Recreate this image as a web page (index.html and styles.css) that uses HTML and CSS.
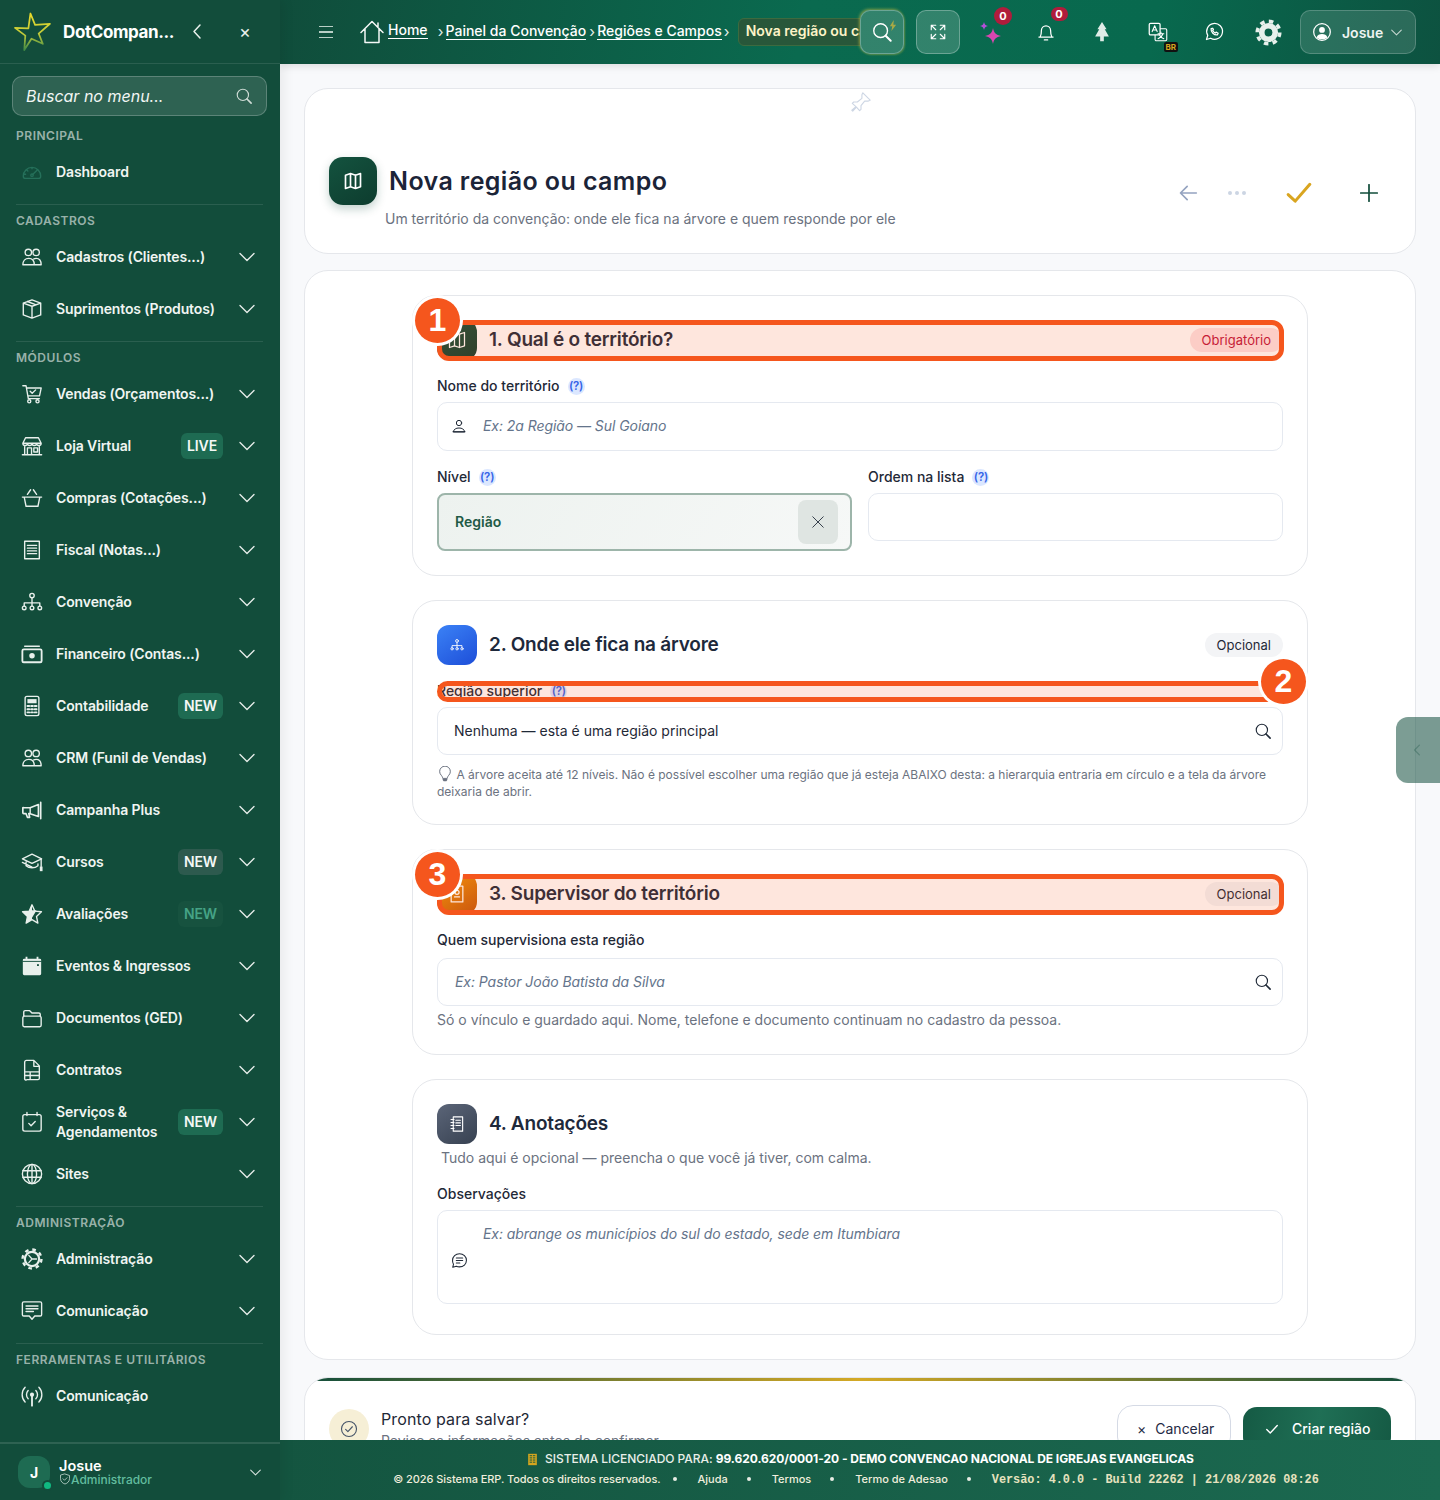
FILE: index.html
```html
<!DOCTYPE html>
<html lang="pt-BR">
<head>
<meta charset="utf-8">
<title>Nova região ou campo</title>
<link rel="stylesheet" href="styles.css">
</head>
<body>
<svg class="sprite" aria-hidden="true">
  <defs>
    <linearGradient id="star-grad" x1="0" y1="0" x2="0" y2="1"><stop offset="0" stop-color="#e8d92a"/><stop offset=".55" stop-color="#c2cb3a"/><stop offset="1" stop-color="#3f8a45"/></linearGradient>
    <symbol id="i-chev" viewBox="0 0 16 16"><path d="M1 4.500l7 7 7-7"/></symbol>
    <symbol id="i-dash" viewBox="0 0 24 24"><path d="M2.500 16.500a9.500 9.500 0 1 1 19 0c0 1.500-1 2.500-2.500 2.500H5c-1.500 0-2.500-1-2.500-2.500zM12 7v1.500M6.500 10l1 1M17.500 10l-4.500 4.500M3.500 14.500H5"/><circle cx="12" cy="15.500" r="1.300"/></symbol>
    <symbol id="i-people" viewBox="0 0 24 24"><circle cx="8" cy="7" r="3.500"/><circle cx="16.500" cy="7" r="3.500"/><path d="M2 20.500c0-4 2.500-7 6.500-7s6 3 6 7zM14 14c.8-.4 1.600-.5 2.500-.5 3.500 0 5.500 3 5.500 7h-7.500"/></symbol>
    <symbol id="i-box" viewBox="0 0 24 24"><path d="M12 2l9.500 3.500v13L12 22l-9.500-3.500v-13zM2.500 5.500L12 9l9.500-3.500M12 9v13M7 3.800l9.500 3.600"/></symbol>
    <symbol id="i-cart" viewBox="0 0 24 24"><path d="M2 3h3.500l2.500 14h12M6 5.500h16l-1.800 8.500H7.500M10 9l2.200 2.200L16 7.500"/><circle cx="9" cy="20" r="1.700"/><circle cx="18" cy="20" r="1.700"/></symbol>
    <symbol id="i-shop" viewBox="0 0 24 24"><path d="M5 3h14l3 6c0 1.500-1.200 2.500-2.500 2.500S17 10.500 17 9c0 1.500-1.200 2.500-2.500 2.500S12 10.500 12 9c0 1.500-1.200 2.500-2.500 2.500S7 10.500 7 9c0 1.500-1.200 2.500-2.500 2.500S2 10.500 2 9zM2 9h20M4 11.500V21M20 11.500V21M1.500 21.500h21M7 14h4.500v7.500H7zM14 14h4v4.500h-4z"/></symbol>
    <symbol id="i-basket" viewBox="0 0 24 24"><path d="M1.500 11h21M3.500 11l2 10h13l2-10M7 8l3.500-5M17 8l-3.500-5"/></symbol>
    <symbol id="i-notes" viewBox="0 0 24 24"><path d="M4 2.500h16v19H4zM7 7h10M7 10h10M7 13h10M7 16h10"/></symbol>
    <symbol id="i-org" viewBox="0 0 24 24"><circle cx="12" cy="5" r="2.400"/><circle cx="3.500" cy="18.500" r="2"/><circle cx="12" cy="18.500" r="2"/><circle cx="20.500" cy="18.500" r="2"/><path d="M12 7.500v9M3.500 16.500v-3.500h17v3.500"/></symbol>
    <symbol id="i-cash" viewBox="0 0 24 24"><path d="M4 3.500h16"/><rect x="1.500" y="7" width="21" height="14" rx="1.500" stroke-width="2"/><circle class="solid" cx="12" cy="14" r="3"/></symbol>
    <symbol id="i-calc" viewBox="0 0 24 24"><rect x="4.500" y="1.500" width="15" height="21" rx="2"/><rect class="solid" x="7" y="4.500" width="10" height="4.500"/><path d="M7 12h2M11 12h2M15 12h2M7 15.500h2M11 15.500h2M15 15.500h2M7 19h2M11 19h2M15 19h2" stroke-width="2"/></symbol>
    <symbol id="i-mega" viewBox="0 0 24 24"><path d="M2 9.500v5.500a1 1 0 0 0 1 1h2.500l1.500 4h2.500l-1-4H10l9 3V6l-9 3.500H3a1 1 0 0 0-1 0zM21.500 3.500v18" stroke-width="1.800"/><path d="M10 9.500V16"/></symbol>
    <symbol id="i-cap" viewBox="0 0 24 24"><path d="M12 3.500L1.500 8.500 12 13.500l10.500-5zM5.500 12v4c3.500 3 9.500 3 13 0v-2M1.500 12.500L12 17.500"/><rect class="solid" x="20.500" y="17" width="3" height="5"/><path d="M22 9v8"/></symbol>
    <symbol id="i-star" viewBox="0 0 24 24"><path d="M12 2l3 6.800 7.300.8-5.400 5 1.500 7.300-6.400-3.700-6.400 3.700 1.500-7.300-5.400-5 7.300-.8z"/><path class="solid" d="M12 2L9 8.800l-7.300.8 5.400 5-1.500 7.300 6.400-3.700zM12 8h5l-5 8z"/></symbol>
    <symbol id="i-calfill" viewBox="0 0 24 24"><path class="solid" d="M5 2h2v2h10V2h2v2h1.500A1.500 1.500 0 0 1 22 5.500v15a1.500 1.500 0 0 1-1.500 1.500h-17A1.500 1.500 0 0 1 2 20.500v-15A1.500 1.500 0 0 1 3.500 4H5z"/><path d="M2 7h20" stroke="#124d3b" stroke-width="1"/><rect x="17.500" y="10" width="2" height="2" fill="#124d3b" stroke="none"/></symbol>
    <symbol id="i-folder" viewBox="0 0 24 24"><path d="M3 10V5.500A1.500 1.500 0 0 1 4.500 4h5L12 6.500h7.500A1.500 1.500 0 0 1 21 8v2M4 10h16a2 2 0 0 1 2 2v8a1.500 1.500 0 0 1-1.500 1.500h-17A1.500 1.500 0 0 1 2 20v-8a2 2 0 0 1 2-2z"/></symbol>
    <symbol id="i-file" viewBox="0 0 24 24"><path d="M6 1.500h8l6 6V21a1.500 1.500 0 0 1-1.500 1.500h-12A1.500 1.500 0 0 1 4 21V3.500a2 2 0 0 1 2-2zM14 1.500V8h6M4 14h16M4 18h16M10 14v8.500"/></symbol>
    <symbol id="i-calcheck" viewBox="0 0 24 24"><rect x="2" y="4" width="20" height="18" rx="2"/><path d="M6.500 1.500V5M17.500 1.500V5M8.500 13.500l2.500 2.500 4.500-4.500"/></symbol>
    <symbol id="i-globe" viewBox="0 0 24 24"><circle cx="12" cy="12" r="10.500"/><ellipse cx="12" cy="12" rx="5" ry="10.500"/><path d="M12 1.500v21M2 8.500h20M2 15.500h20"/></symbol>
    <symbol id="i-gear" viewBox="0 0 24 24"><circle cx="12" cy="12" r="7.800" stroke-width="2.400"/><circle cx="12" cy="12" r="10.300" stroke-width="2.600" stroke-linecap="butt" stroke-dasharray="3.900 4.190"/><path d="M12 12L8.500 8M12 12h5M12 12l-3.500 4" stroke-width="1.400"/></symbol>
    <symbol id="i-chat" viewBox="0 0 24 24"><path d="M3 2h18a1.500 1.500 0 0 1 1.500 1.500V16a1.500 1.500 0 0 1-1.500 1.500h-6L12 21l-3-3.500H3A1.500 1.500 0 0 1 1.500 16V3.500A1.500 1.500 0 0 1 3 2zM5.500 6.500h13M5.500 9.500h13M5.500 12.500h8"/></symbol>
    <symbol id="i-radio" viewBox="0 0 24 24"><circle class="solid" cx="12" cy="10.500" r="2.300"/><path d="M12 12v10.500" stroke-width="2"/><path d="M7.800 6a6.500 6.500 0 0 0 0 9M16.200 6a6.500 6.500 0 0 1 0 9M4.500 2.500a11.500 11.500 0 0 0 0 16M19.500 2.500a11.500 11.500 0 0 1 0 16"/></symbol>
    <symbol id="i-search" viewBox="0 0 24 24"><circle cx="10.500" cy="10.500" r="7.500"/><path d="M16 16l5.500 5.500" stroke-width="2.200"/></symbol>
    <symbol id="i-map" viewBox="0 0 24 24"><path d="M3 5l6-2 6 2 6-2v16l-6 2-6-2-6 2zM9 3v16M15 5v16"/></symbol>
    <symbol id="i-person" viewBox="0 0 24 24"><circle cx="12" cy="7.500" r="4"/><path d="M3.500 20.500c1-4 4-5.500 8.500-5.500s7.500 1.500 8.500 5.500zM3 20.500h18"/></symbol>
    <symbol id="i-x" viewBox="0 0 24 24"><path d="M3 3l18 18M21 3L3 21"/></symbol>
    <symbol id="i-check" viewBox="0 0 24 24"><path d="M3 13l6 6L21 6"/></symbol>
    <symbol id="i-bulb" viewBox="0 0 24 24"><path d="M8.500 18c-.3-2-1.200-3-2.500-4.500A8 8 0 1 1 18 13.500c-1.300 1.500-2.200 2.500-2.500 4.500z"/><path class="solid" d="M8.500 19h7v2l-1.500 2h-4l-1.500-2z"/></symbol>
    <symbol id="i-bubble" viewBox="0 0 24 24"><path d="M12 2.500c5.500 0 9.800 4 9.800 9.300S17.500 21 12 21c-1.800 0-3.300-.4-4.500-1L2.500 21.500l1-4.200A9 9 0 0 1 2.200 11.800C2.200 6.500 6.500 2.500 12 2.500zM7.500 8.500h9M7.500 12h9M7.500 15.500h5"/></symbol>
    <symbol id="i-notebook" viewBox="0 0 24 24"><path d="M7 2.500h12.500v19H7zM4 6h4M4 10h4M4 14h4M4 18h4M10.500 7h6M10.500 10.500h6M10.500 14h6"/></symbol>
    <symbol id="i-checkc" viewBox="0 0 24 24"><circle cx="12" cy="12" r="10"/><path d="M7.500 12.500l3 3 6-6.500"/></symbol>
    <symbol id="i-shield" viewBox="0 0 24 24"><path d="M12 2l9 3v6c0 6-4 9.500-9 11-5-1.500-9-5-9-11V5zM8 11.500l3 3 5-5"/></symbol>
    <symbol id="i-building" viewBox="0 0 24 24"><path class="solid" d="M4 1.500h16v21H4z"/><path d="M7.500 5h3M13.500 5h3M7.500 9h3M13.500 9h3M7.500 13h3M13.500 13h3M7.500 17h3M13.500 17h3" stroke="#155a45" stroke-width="1.800"/></symbol>
  </defs>
</svg>

<div class="app">
  <aside class="sidebar">
    <div class="brand">
      <svg class="logo" viewBox="0 0 36 40"><path d="M16 2l4.500 11L35 12l-11 9.500 4 10-11-5-7 11 1-14L1 16l13 .500z" fill="none" stroke="url(#star-grad)" stroke-width="1.700"/></svg>
      <span class="brand-name">DotCompan...</span>
      <svg class="brand-back" viewBox="0 0 10 17"><path d="M8 2L2 8.500 8 15"/></svg>
      <span class="brand-close">×</span>
    </div>
    <div class="menu-search">
      <span class="menu-search-text">Buscar no menu...</span>
      <svg class="ic18"><use href="#i-search"/></svg>
    </div>
    <nav class="nav">
      <section class="nav-group first">
        <h4 class="nav-label">PRINCIPAL</h4>
        <div class="nav-item"><svg class="nav-ic dim"><use href="#i-dash"/></svg><span class="nav-text">Dashboard</span></div>
      </section>
      <section class="nav-group">
        <h4 class="nav-label">CADASTROS</h4>
        <div class="nav-item"><svg class="nav-ic"><use href="#i-people"/></svg><span class="nav-text">Cadastros (Clientes...)</span><svg class="chev"><use href="#i-chev"/></svg></div>
        <div class="nav-item"><svg class="nav-ic"><use href="#i-box"/></svg><span class="nav-text">Suprimentos (Produtos)</span><svg class="chev"><use href="#i-chev"/></svg></div>
      </section>
      <section class="nav-group">
        <h4 class="nav-label">MÓDULOS</h4>
        <div class="nav-item"><svg class="nav-ic"><use href="#i-cart"/></svg><span class="nav-text">Vendas (Orçamentos...)</span><svg class="chev"><use href="#i-chev"/></svg></div>
        <div class="nav-item"><svg class="nav-ic"><use href="#i-shop"/></svg><span class="nav-text">Loja Virtual</span><span class="tag">LIVE</span><svg class="chev"><use href="#i-chev"/></svg></div>
        <div class="nav-item"><svg class="nav-ic"><use href="#i-basket"/></svg><span class="nav-text">Compras (Cotações...)</span><svg class="chev"><use href="#i-chev"/></svg></div>
        <div class="nav-item"><svg class="nav-ic"><use href="#i-notes"/></svg><span class="nav-text">Fiscal (Notas...)</span><svg class="chev"><use href="#i-chev"/></svg></div>
        <div class="nav-item"><svg class="nav-ic"><use href="#i-org"/></svg><span class="nav-text">Convenção</span><svg class="chev"><use href="#i-chev"/></svg></div>
        <div class="nav-item"><svg class="nav-ic"><use href="#i-cash"/></svg><span class="nav-text">Financeiro (Contas...)</span><svg class="chev"><use href="#i-chev"/></svg></div>
        <div class="nav-item"><svg class="nav-ic"><use href="#i-calc"/></svg><span class="nav-text">Contabilidade</span><span class="tag">NEW</span><svg class="chev"><use href="#i-chev"/></svg></div>
        <div class="nav-item"><svg class="nav-ic"><use href="#i-people"/></svg><span class="nav-text">CRM (Funil de Vendas)</span><svg class="chev"><use href="#i-chev"/></svg></div>
        <div class="nav-item"><svg class="nav-ic"><use href="#i-mega"/></svg><span class="nav-text">Campanha Plus</span><svg class="chev"><use href="#i-chev"/></svg></div>
        <div class="nav-item"><svg class="nav-ic"><use href="#i-cap"/></svg><span class="nav-text">Cursos</span><span class="tag tag-grey">NEW</span><svg class="chev"><use href="#i-chev"/></svg></div>
        <div class="nav-item"><svg class="nav-ic"><use href="#i-star"/></svg><span class="nav-text">Avaliações</span><span class="tag tag-faint">NEW</span><svg class="chev"><use href="#i-chev"/></svg></div>
        <div class="nav-item"><svg class="nav-ic"><use href="#i-calfill"/></svg><span class="nav-text">Eventos &amp; Ingressos</span><svg class="chev"><use href="#i-chev"/></svg></div>
        <div class="nav-item"><svg class="nav-ic"><use href="#i-folder"/></svg><span class="nav-text">Documentos (GED)</span><svg class="chev"><use href="#i-chev"/></svg></div>
        <div class="nav-item"><svg class="nav-ic"><use href="#i-file"/></svg><span class="nav-text">Contratos</span><svg class="chev"><use href="#i-chev"/></svg></div>
        <div class="nav-item"><svg class="nav-ic"><use href="#i-calcheck"/></svg><span class="nav-text">Serviços &amp; Agendamentos</span><span class="tag">NEW</span><svg class="chev"><use href="#i-chev"/></svg></div>
        <div class="nav-item"><svg class="nav-ic"><use href="#i-globe"/></svg><span class="nav-text">Sites</span><svg class="chev"><use href="#i-chev"/></svg></div>
      </section>
      <section class="nav-group">
        <h4 class="nav-label">ADMINISTRAÇÃO</h4>
        <div class="nav-item"><svg class="nav-ic"><use href="#i-gear"/></svg><span class="nav-text">Administração</span><svg class="chev"><use href="#i-chev"/></svg></div>
        <div class="nav-item"><svg class="nav-ic"><use href="#i-chat"/></svg><span class="nav-text">Comunicação</span><svg class="chev"><use href="#i-chev"/></svg></div>
      </section>
      <section class="nav-group">
        <h4 class="nav-label">FERRAMENTAS E UTILITÁRIOS</h4>
        <div class="nav-item"><svg class="nav-ic"><use href="#i-radio"/></svg><span class="nav-text">Comunicação</span></div>
      </section>
    </nav>
    <div class="side-user">
      <div class="avatar">J<span class="online"></span></div>
      <div class="side-user-info">
        <div class="side-user-name">Josue</div>
        <div class="side-user-role"><svg class="ic12"><use href="#i-shield"/></svg>Administrador</div>
      </div>
      <svg class="chev-sm"><use href="#i-chev"/></svg>
    </div>
  </aside>

  <div class="main">
    <header class="topbar">
      <div class="burger"><span></span><span></span><span></span></div>
      <div class="crumbs">
        <svg class="home-ic" viewBox="0 0 24 24"><path d="M1 12.500L12 1.500l11 11M5 9v13.500h14V9M18 3v3.500"/></svg>
        <a class="crumb crumb-home">Home</a>
        <span class="sep sep-first">›</span>
        <a class="crumb">Painel da Convenção</a>
        <span class="sep sep-mid">›</span>
        <a class="crumb">Regiões e Campos</a>
        <span class="sep sep-last">›</span>
        <span class="crumb-current">Nova região ou campo</span>
      </div>
      <div class="top-actions">
        <button class="glass glass-glow"><svg class="ic22"><use href="#i-search"/></svg><svg class="bolt" viewBox="0 0 10 14"><path d="M6 0L1 8h3l-1 6 6-8H5.500z"/></svg></button>
        <button class="glass"><svg class="ic18" viewBox="0 0 24 24"><path d="M9 9L3 3M3 9V3h6M15 9l6-6M15 3h6v6M9 15l-6 6M3 15v6h6M15 15l6 6M21 15v6h-6"/></svg></button>
        <div class="top-cell top-cell-first">
          <svg class="spark" viewBox="0 0 24 30"><path fill="#d946b0" d="M14 9c1 5 3 7 8 8-5 1-7 3-8 8-1-5-3-7-8-8 5-1 7-3 8-8z"/><path fill="#b44fd8" d="M5 3c.5 2.500 1.500 3.500 4 4-2.500.5-3.500 1.500-4 4-.5-2.500-1.500-3.500-4-4 2.500-.5 3.500-1.500 4-4z"/></svg>
          <span class="count count-a">0</span>
        </div>
        <div class="top-cell">
          <svg class="ic20 w" viewBox="0 0 24 24"><path d="M5 18c1-1.500 1.500-2.500 1.500-8a5.500 5.500 0 0 1 11 0c0 5.500.5 6.500 1.500 8zM3.500 18h17M10 21.500h4"/></svg>
          <span class="count count-b">0</span>
        </div>
        <div class="top-cell"><svg class="tree" viewBox="0 0 24 24"><path d="M12 1l5 8h-2l4.500 8H14v5h-4v-5H4.500L9 9H7z"/></svg></div>
        <div class="top-cell">
          <svg class="ic20 w nudge" viewBox="0 0 24 24"><rect x="1.500" y="1.500" width="13" height="14" rx="1.500"/><path d="M5 11.500l3-7 3 7M6 9.500h4" stroke-width="1.300"/><path d="M15 8h6a1.500 1.500 0 0 1 1.500 1.500V21a1.500 1.500 0 0 1-1.500 1.500H10a1.500 1.500 0 0 1-1.500-1.500v-5M12 14h7M15.500 12v2M18 14c-1 3-3 5-6 6M14 16c1 2 3 3.500 5 4" stroke-width="1.300"/></svg>
          <span class="br-tag">BR</span>
        </div>
        <div class="top-cell"><svg class="ic20 w nudge" viewBox="0 0 24 24"><path d="M3 21l1.500-5A9.500 9.500 0 1 1 8 19.500zM8.500 8c-.5 4 3.500 8 7.500 7.500l1-2-2.500-1.300-1 1c-1.500-.7-2.500-1.700-3.200-3.200l1-1L10.500 7.500z"/></svg></div>
        <div class="top-cell"><svg class="ic26" viewBox="0 0 24 24"><circle cx="12" cy="12" r="6" fill="none" stroke="#e8f0ec" stroke-width="5"/><circle cx="12" cy="12" r="10" fill="none" stroke="#e8f0ec" stroke-width="3.200" stroke-linecap="butt" stroke-dasharray="4 3.854"/></svg></div>
        <div class="user-btn">
          <svg class="ic20 w" viewBox="0 0 24 24"><circle cx="12" cy="12" r="10"/><circle class="solid-w" cx="12" cy="9.500" r="3.500"/><path class="solid-w" d="M5.500 18.500c1-3 3.500-4 6.500-4s5.500 1 6.500 4c-3.500 3-9.500 3-13 0z"/></svg>
          <span class="user-name">Josue</span>
          <svg class="chev-user"><use href="#i-chev"/></svg>
        </div>
      </div>
    </header>

    <main class="content">
      <div class="card page-head">
        <svg class="pin" viewBox="0 0 24 24"><path d="M14 2l8 8-2 1-4 0-4 5 0 4-1.500 1.500-3.500-4L3 22l-1-1 4.500-4-4-3.500L4 12h4l5-4 0-4z"/></svg>
        <div class="head-main">
          <div class="head-title-row">
            <div class="head-icon"><svg class="ic20 w"><use href="#i-map"/></svg></div>
            <h1 class="head-title">Nova região ou campo</h1>
          </div>
          <p class="head-sub">Um território da convenção: onde ele fica na árvore e quem responde por ele</p>
        </div>
        <div class="head-actions">
          <div class="act act-back"><svg class="ic20" viewBox="0 0 24 24"><path d="M22 12H3M11 4l-8 8 8 8"/></svg></div>
          <div class="act act-more"><i></i><i></i><i></i></div>
          <div class="act act-ok"><svg class="ok-ic" viewBox="0 0 24 24"><path d="M2 13.500l6.500 6L22 4"/></svg></div>
          <div class="act act-add"><svg class="ic18" viewBox="0 0 24 24"><path d="M12 1v22M1 12h22"/></svg></div>
        </div>
      </div>

      <div class="card form-card">
        <section class="block">
          <div class="block-head">
            <div class="block-icon bi-green"><svg class="ic20 w"><use href="#i-map"/></svg></div>
            <h2 class="block-title">1. Qual é o território?</h2>
            <span class="pill pill-req">Obrigatório</span>
            <div class="mark"><span class="mark-num mn-left">1</span></div>
          </div>
          <div class="label-row"><label class="label">Nome do território</label><span class="help">(?)</span></div>
          <div class="field field-tall"><svg class="ic16 dark"><use href="#i-person"/></svg><span class="ph ph-icon">Ex: 2a Região — Sul Goiano</span></div>
          <div class="two-col">
            <div>
              <div class="label-row"><label class="label">Nível</label><span class="help">(?)</span></div>
              <div class="select">
                <span class="select-val">Região</span>
                <span class="select-clear"><svg class="ic14 dark"><use href="#i-x"/></svg></span>
              </div>
            </div>
            <div>
              <div class="label-row"><label class="label">Ordem na lista</label><span class="help">(?)</span></div>
              <div class="field"></div>
            </div>
          </div>
        </section>

        <section class="block">
          <div class="block-head">
            <div class="block-icon bi-blue"><svg class="ic14 w"><use href="#i-org"/></svg></div>
            <h2 class="block-title">2. Onde ele fica na árvore</h2>
            <span class="pill">Opcional</span>
          </div>
          <div class="label-row">
            <label class="label">Região superior</label><span class="help">(?)</span>
            <div class="mark"><span class="mark-num mn-right">2</span></div>
          </div>
          <div class="field field-pad"><span class="val">Nenhuma — esta é uma região principal</span><svg class="ic18 dark"><use href="#i-search"/></svg></div>
          <p class="hint-tree"><svg class="ic14 grey"><use href="#i-bulb"/></svg> A árvore aceita até 12 níveis. Não é possível escolher uma região que já esteja ABAIXO desta: a hierarquia entraria em círculo e a tela da árvore deixaria de abrir.</p>
        </section>

        <section class="block">
          <div class="block-head">
            <div class="block-icon bi-orange"><svg class="ic20 w" viewBox="0 0 24 24"><path d="M5 2.500h14v19H5zM9 15.500h6M12 7.500a2.500 2.500 0 1 1 0 5 2.500 2.500 0 0 1 0-5z"/></svg></div>
            <h2 class="block-title">3. Supervisor do território</h2>
            <span class="pill">Opcional</span>
            <div class="mark"><span class="mark-num mn-left">3</span></div>
          </div>
          <div class="label-row label-row-wide"><label class="label">Quem supervisiona esta região</label></div>
          <div class="field field-pad"><span class="ph">Ex: Pastor João Batista da Silva</span><svg class="ic18 dark"><use href="#i-search"/></svg></div>
          <p class="hint-plain">Só o vínculo e guardado aqui. Nome, telefone e documento continuam no cadastro da pessoa.</p>
        </section>

        <section class="block block-last">
          <div class="block-head">
            <div class="block-icon bi-slate"><svg class="ic18 w"><use href="#i-notebook"/></svg></div>
            <h2 class="block-title">4. Anotações</h2>
          </div>
          <p class="block-note">Tudo aqui é opcional — preencha o que você já tiver, com calma.</p>
          <div class="label-row label-row-note"><label class="label">Observações</label></div>
          <div class="area">
            <svg class="ic17 dark"><use href="#i-bubble"/></svg>
            <span class="ph ph-area">Ex: abrange os municípios do sul do estado, sede em Itumbiara</span>
          </div>
        </section>
      </div>

      <div class="card save-card">
        <div class="save-bar"></div>
        <div class="save-row">
          <div class="save-ic"><svg class="ic18 slate"><use href="#i-checkc"/></svg></div>
          <div class="save-text">
            <div class="save-title">Pronto para salvar?</div>
            <div class="save-sub">Revise as informações antes de confirmar.</div>
          </div>
          <button class="btn btn-cancel"><span class="btn-x">×</span>Cancelar</button>
          <button class="btn btn-save"><svg class="ic14 w"><use href="#i-check"/></svg>Criar região</button>
        </div>
      </div>
    </main>

    <div class="side-tab"><svg class="tab-chev" viewBox="0 0 10 16"><path d="M8 2L2 8l6 6"/></svg></div>

    <footer class="footer">
      <div class="foot-line1"><svg class="ic13 gold"><use href="#i-building"/></svg><span>SISTEMA LICENCIADO PARA:</span> <b>99.620.620/0001-20 - DEMO CONVENCAO NACIONAL DE IGREJAS EVANGELICAS</b></div>
      <div class="foot-line2">
        <span class="foot-copy">© 2026 Sistema ERP. Todos os direitos reservados.</span><i class="dot"></i>
        <a>Ajuda</a><i class="dot"></i>
        <a>Termos</a><i class="dot"></i>
        <a>Termo de Adesao</a><i class="dot"></i>
        <span class="mono">Versão: 4.0.0 - Build 22262 | 21/08/2026 08:26</span>
      </div>
    </footer>
  </div>
</div>
</body>
</html>
```
FILE: styles.css
```css
* { box-sizing: border-box; }
html, body { margin: 0; height: 100%; }
body { font-family: Inter, "Liberation Sans", sans-serif; color: #1f2937; background: #f8f9fb; overflow: hidden; }
h1, h2, h4, p { margin: 0; }
button { font-family: inherit; }
.sprite { position: absolute; width: 0; height: 0; }
svg { fill: none; stroke: currentColor; stroke-width: 1.5; stroke-linecap: round; stroke-linejoin: round; flex: none; display: block; }
.solid { fill: currentColor; stroke: none; }
.solid-w { fill: #fff; stroke: none; }

.ic12 { width: 12px; height: 12px; }
.ic13 { width: 13px; height: 13px; }
.ic14 { width: 14px; height: 14px; }
.ic16 { width: 16px; height: 16px; }
.ic17 { width: 17px; height: 17px; }
.ic18 { width: 18px; height: 18px; }
.ic20 { width: 20px; height: 20px; }
.ic22 { width: 22px; height: 22px; }
.ic26 { width: 27px; height: 27px; }
.w { color: #fff; }
.dark { color: #1f2937; }
.grey { color: #6b7280; }
.slate { color: #475569; }
.gold { color: #d4a51f; }

.app { display: flex; width: 1440px; height: 1500px; }

/* sidebar */
.sidebar { width: 280px; flex: none; height: 1500px; background: #124d3b; color: #eef4f1; display: flex; flex-direction: column; box-shadow: 3px 0 12px rgba(0,0,0,.07); z-index: 3; }
.brand { height: 64px; flex: none; display: flex; align-items: center; padding-left: 14px; border-bottom: 1px solid rgba(255,255,255,.1); }
.logo { width: 37px; height: 42px; }
.brand-name { font-size: 17px; font-weight: 700; color: #fff; margin-left: 12px; width: 112px; letter-spacing: -.4px; white-space: nowrap; }
.brand-back { width: 10px; height: 17px; margin-left: 17px; color: #e8f0ec; }
.brand-close { font-size: 18px; margin-left: 37px; color: #e8f0ec; line-height: 1; }
.menu-search { margin: 12px 13px 4px 12px; height: 40px; flex: none; display: flex; align-items: center; justify-content: space-between; padding: 0 13px; border-radius: 10px; background: rgba(255,255,255,.12); border: 1px solid rgba(255,255,255,.22); color: #cfdcd6; }
.menu-search-text { font-size: 16px; font-style: italic; color: #f2f6f4; }
.nav { flex: 1; min-height: 0; overflow: hidden; }
.nav-group { margin: 6px 17px 0 16px; border-top: 1px solid rgba(255,255,255,.1); }
.nav-group.first { margin-top: 0; border-top: 0; }
.nav-label { height: 26px; padding-top: 5px; line-height: 22px; font-size: 12px; font-weight: 600; letter-spacing: .53px; color: rgba(255,255,255,.58); white-space: nowrap; }
.nav-item { height: 52px; margin: 0 -17px 0 -16px; display: flex; align-items: center; padding: 0 25px 0 21px; font-size: 14px; font-weight: 600; letter-spacing: -.12px; color: #f0f5f2; }
.nav-ic { width: 22px; height: 22px; margin-right: 13px; color: #e8f0ec; }
.nav-ic.dim { color: #25705a; }
.nav-text { flex: 1; min-width: 0; line-height: 20px; }
.tag { flex: none; height: 26px; line-height: 26px; padding: 0 6px; border-radius: 6px; background: #1e6b52; color: #f4f8f6; font-size: 14px; font-weight: 600; }
.tag-grey { background: #2d5a4e; }
.tag-faint { background: #17523f; color: #45a386; }
.chev { width: 16px; height: 16px; margin-left: 16px; color: #e4ece8; stroke-width: 1.4; }
.side-user { height: 58px; flex: none; display: flex; align-items: center; padding: 0 18px; border-top: 2px solid rgba(255,255,255,.12); }
.avatar { position: relative; width: 32px; height: 32px; border-radius: 12px; background: #1e6b52; color: #fff; font-weight: 700; font-size: 14px; display: flex; align-items: center; justify-content: center; }
.online { position: absolute; right: -1px; bottom: -1px; width: 7px; height: 7px; border-radius: 50%; background: #10b981; box-shadow: 0 0 0 2px #124d3b; }
.side-user-info { flex: 1; margin-left: 9px; }
.side-user-name { font-size: 14.500px; line-height: 14px; font-weight: 600; color: #fff; }
.side-user-role { display: flex; align-items: center; font-size: 12px; line-height: 13px; font-weight: 500; color: #62bd9f; }
.side-user-role svg { color: #cfe3db; }
.chev-sm { width: 11px; height: 11px; color: #d8e4df; margin-right: 1px; }

/* main */
.main { position: relative; flex: 1; min-width: 0; height: 1500px; display: flex; flex-direction: column; }
.topbar { height: 64px; flex: none; display: flex; align-items: center; padding-left: 30px; padding-right: 24px; background: linear-gradient(100deg, #104d3b 0%, #0a6a4f 45%, #08694e 75%, #0d5240 100%); box-shadow: 0 2px 8px rgba(0,0,0,.12); z-index: 2; }
.burger { width: 32px; flex: none; display: flex; flex-direction: column; align-items: center; gap: 4px; }
.burger span { width: 14px; height: 1.500px; background: #b9cfc6; }
.crumbs { flex: 1; min-width: 0; overflow: hidden; display: flex; align-items: center; margin-left: 18px; height: 44px; color: #fff; white-space: nowrap; }
.home-ic { width: 24px; height: 24px; flex: none; margin-right: 4px; color: #f4f8f6; }
.crumb { font-size: 14px; font-weight: 500; letter-spacing: 0; color: #fff; border-bottom: 1px solid #fff; line-height: 17px; flex: none; margin-top: -2px; }
.crumb-home { margin-top: -4px; }
.sep { width: 10px; text-align: center; font-size: 15px; line-height: 1; color: #e2ece8; flex: none; margin-top: -2px; }
.sep-first { margin-left: 8px; }
.sep-mid { margin-left: 1px; }
.sep-last { margin-right: 6px; }
.crumb-current { flex: none; height: 28px; line-height: 24px; padding: 0 8px 0 7px; border-radius: 6px; background: #28573a; border: 1px solid #3d6a3f; color: #fdf3c7; font-size: 14px; font-weight: 600; }
.top-actions { flex: none; display: flex; align-items: center; }
.glass { position: relative; width: 44px; height: 44px; padding: 0; display: flex; align-items: center; justify-content: center; border-radius: 10px; background: rgba(255,255,255,.17); border: 1px solid rgba(255,255,255,.28); color: #fff; margin-right: 12px; }
.glass-glow { box-shadow: -1px -1px 3px rgba(200,190,70,.6), 1px 1px 2px rgba(200,190,70,.35); }
.bolt { position: absolute; top: 9px; right: 6px; width: 8px; height: 11px; stroke: none; fill: #a9a944; }
.top-cell { position: relative; width: 55.500px; height: 44px; display: flex; align-items: center; justify-content: center; }
.top-cell-first { margin-left: -9px; }
.spark { width: 24px; height: 30px; stroke: none; margin-top: 3px; }
.tree { width: 22px; height: 22px; fill: #dfece7; stroke: none; }
.nudge { margin-left: 2px; }
.count { position: absolute; display: block; border-radius: 50%; background: #b01c3c; color: #fff; font-size: 11px; font-weight: 700; text-align: center; }
.count-a { top: -3px; left: 31px; width: 18px; height: 18px; line-height: 18px; }
.count-b { top: -3px; left: 32px; width: 17px; height: 14px; line-height: 14px; border-radius: 8px; }
.br-tag { position: absolute; top: 32px; left: 34px; height: 10px; line-height: 10px; padding: 0 2px; border-radius: 2px; background: #111; color: #d4a51f; font-size: 8px; font-weight: 700; }
.user-btn { width: 116px; height: 44px; margin-left: 4px; display: flex; align-items: center; padding-left: 11px; border-radius: 10px; background: rgba(255,255,255,.13); border: 1px solid rgba(255,255,255,.2); color: #fff; }
.user-name { font-size: 14px; font-weight: 600; margin-left: 10px; color: #eef4f1; }
.chev-user { width: 11px; height: 11px; margin-left: 8px; color: #c7d8d1; }

.content { flex: 1; min-height: 0; overflow: hidden; padding: 24px 24px 0; background: #f8f9fb; }
.card { background: #fff; border: 1px solid #e5e7eb; border-radius: 24px; }

.page-head { position: relative; height: 166px; padding: 68px 24px 0; display: flex; align-items: flex-start; }
.pin { position: absolute; left: 545px; top: 2px; width: 22px; height: 22px; color: #cdd6e4; stroke-width: 1.2; }
.head-main { flex: 1; min-width: 0; }
.head-title-row { display: flex; align-items: center; gap: 12px; }
.head-icon { width: 48px; height: 48px; border-radius: 14px; background: linear-gradient(145deg, #14533f, #0d3c2e); display: flex; align-items: center; justify-content: center; box-shadow: 0 4px 10px rgba(17,77,60,.25); }
.head-icon svg { stroke-width: 2; }
.head-title { font-size: 25px; line-height: 48px; font-weight: 600; color: #1b2438; letter-spacing: .4px; margin-top: -1px; }
.head-sub { font-size: 14px; line-height: 20px; color: #6b7280; margin: 4px 0 0 56px; }
.head-actions { display: flex; align-items: center; height: 72px; }
.act { display: flex; align-items: center; justify-content: center; }
.act-back { width: 74px; color: #94a3c0; }
.act-back svg { stroke-width: 2; }
.act-more { width: 24px; gap: 3px; }
.act-more i { width: 4px; height: 4px; border-radius: 50%; background: #ccd5e3; }
.act-ok { width: 98px; color: #d9a520; }
.ok-ic { width: 26px; height: 26px; stroke-width: 2.800; margin-left: 2px; }
.act-add { width: 44px; color: #124d3b; }
.act-add svg { stroke-width: 2.300; }

.form-card { margin-top: 16px; padding: 24px 107px; height: 1090px; }
.block { border: 1px solid #e5e7eb; border-radius: 24px; padding: 24px; margin-bottom: 24px; }
.block-last { margin-bottom: 0; padding-bottom: 30px; }
.block-head { position: relative; display: flex; align-items: center; height: 40px; gap: 12px; }
.block-icon { width: 40px; height: 40px; border-radius: 12px; display: flex; align-items: center; justify-content: center; flex: none; }
.bi-green { background: linear-gradient(145deg, #14533f, #0d3c2e); }
.bi-blue { background: linear-gradient(145deg, #3b82f6, #1d4ed8); }
.bi-orange { background: linear-gradient(145deg, #f59e0b, #c2560c); }
.bi-slate { background: linear-gradient(145deg, #5b6578, #374151); }
.block-title { flex: 1; font-size: 19px; font-weight: 600; line-height: 28px; color: #1e293b; letter-spacing: -.2px; }
.pill { flex: none; height: 24px; line-height: 24px; padding: 0 12px; border-radius: 12px; background: #f3f4f6; color: #1f2937; font-size: 13px; font-weight: 400; }
.pill-req { background: #fde2e4; color: #be123c; }

.mark { position: absolute; left: 0; top: 0; right: -1px; bottom: -1px; border: 5px solid #f5561d; border-radius: 12px; background: rgba(245,86,29,.15); z-index: 1; }
.mark-num { position: absolute; width: 45px; height: 45px; border-radius: 50%; background: #f5561d; box-shadow: 0 0 0 3px #fff; color: #fff; font-family: "Liberation Sans", Arial, sans-serif; font-weight: 700; font-size: 32px; line-height: 45px; text-align: center; }
.mn-left { left: -27px; top: -27px; }
.mn-right { right: -27px; top: -27px; }

.label-row { position: relative; display: flex; align-items: center; height: 20px; margin: 16px 0 6px; }
.label-row-wide { margin-bottom: 8px; }
.label-row-note { margin: 16px 0 6px; }
.label { font-size: 14px; font-weight: 500; color: #1f2937; line-height: 20px; }
.help { margin-left: 8px; width: 17px; height: 17px; border-radius: 50%; background: #dbe7ff; color: #3564e8; font-size: 11.500px; font-weight: 600; line-height: 16px; text-align: center; flex: none; letter-spacing: -.2px; }
.field { display: flex; align-items: center; height: 48px; border: 1px solid #e5e9f0; border-radius: 10px; background: #fff; padding: 0 14px 2px 13px; }
.field-tall { height: 49px; }
.field-pad { justify-content: space-between; padding: 0 10px 2px 16px; }
.field-pad .ph { margin-left: 1px; }
.field-pad svg { margin-top: 2px; }
.field-tall svg { margin-top: 1px; }
.ph { font-size: 14px; font-style: italic; color: #64748b; letter-spacing: -.06px; }
.ph-icon { margin-left: 16px; }
.val { font-size: 14px; color: #1f2937; }
.two-col { display: grid; grid-template-columns: 1fr 1fr; gap: 16px; }
.select { display: flex; align-items: center; justify-content: space-between; height: 58px; border: 2px solid #9db5aa; border-radius: 8px; background: linear-gradient(120deg, #edf2ef, #f6f8f7); padding: 0 12px 0 16px; }
.select-val { font-size: 14px; font-weight: 600; color: #1f5a45; margin-top: -2px; }
.select-clear { width: 40px; height: 44px; display: flex; align-items: center; justify-content: center; background: #dfe5e2; border-radius: 8px; }
.hint-tree { margin-top: 11px; font-size: 12px; line-height: 17px; color: #6b7280; }
.hint-tree svg { display: inline-block; vertical-align: -3px; width: 16px; height: 16px; }
.hint-plain { margin-top: 4px; font-size: 14px; line-height: 20px; color: #6b7280; }
.block-note { margin: 4px 0 0 4px; font-size: 14px; line-height: 20px; color: #6b7280; }
.area { position: relative; height: 94px; border: 1px solid #e5e9f0; border-radius: 10px; display: flex; align-items: flex-start; padding: 13px 14px 13px 13px; }
.area svg { margin-top: 28px; }
.ph-area { margin-left: 15px; line-height: 20px; }

.save-card { position: relative; margin-top: 17px; height: 140px; overflow: hidden; padding: 0 24px; }
.save-bar { height: 4px; margin: -1px -25px 0; background: linear-gradient(90deg, #124d3b, #d4a926 50%, #124d3b); }
.save-row { display: flex; align-items: center; height: 48px; margin-top: 24px; }
.save-ic { width: 40px; height: 40px; border-radius: 50%; background: #f6efd6; display: flex; align-items: center; justify-content: center; flex: none; }
.save-text { flex: 1; margin-left: 12px; padding-top: 2px; }
.save-title { font-size: 16px; font-weight: 400; letter-spacing: .12px; line-height: 20px; color: #1f2937; }
.save-sub { font-size: 14px; line-height: 20px; margin-top: 2px; color: #6b7280; }
.btn { display: flex; align-items: center; border-radius: 14px; font-size: 14px; padding: 0 0 2px; }
.btn-cancel { width: 114px; height: 48px; background: #fff; border: 1px solid #d5dae5; color: #1f2a44; border-radius: 16px; padding-left: 19px; margin-right: 12px; font-weight: 400; }
.btn-x { font-size: 14px; margin-right: 9px; }
.btn-save { width: 148px; height: 44px; border: 0; padding-left: 22px; color: #fff; font-weight: 500; background: linear-gradient(100deg, #155a44, #1f6f55 50%, #155a44); }
.btn-save svg { stroke-width: 2.400; margin-right: 13px; margin-top: 2px; }

.side-tab { position: absolute; right: 0; top: 717px; width: 44px; height: 66px; border-radius: 12px 0 0 12px; background: rgba(17,77,60,.55); display: flex; align-items: center; padding-left: 17px; z-index: 1; }
.tab-chev { width: 8px; height: 14px; color: rgba(17,77,60,.3); }

.footer { height: 60px; flex: none; background: linear-gradient(90deg, #145540, #1b6950); text-align: center; color: #e9efe9; z-index: 2; }
.foot-line1 { height: 20px; margin-top: 9px; display: flex; align-items: center; justify-content: center; font-size: 12px; line-height: 20px; font-weight: 500; white-space: pre; letter-spacing: -.04px; }
.foot-line1 svg { margin-right: 6px; }
.foot-line1 b { font-weight: 700; color: #fff; margin-left: 3px; }
.foot-line2 { display: flex; align-items: center; justify-content: center; height: 20px; padding-right: 8px; font-size: 11px; font-weight: 500; color: #f0eedd; white-space: nowrap; }
.foot-copy { letter-spacing: -.06px; }
.dot { width: 4px; height: 4px; border-radius: 50%; background: #e8ece4; margin: 0 21px 0 12px; }
a + .dot { margin-left: 19px; }
.mono { font-family: "Liberation Mono", monospace; font-size: 11.850px; font-weight: 700; color: #e6e2bf; margin-top: 1px; }
```
